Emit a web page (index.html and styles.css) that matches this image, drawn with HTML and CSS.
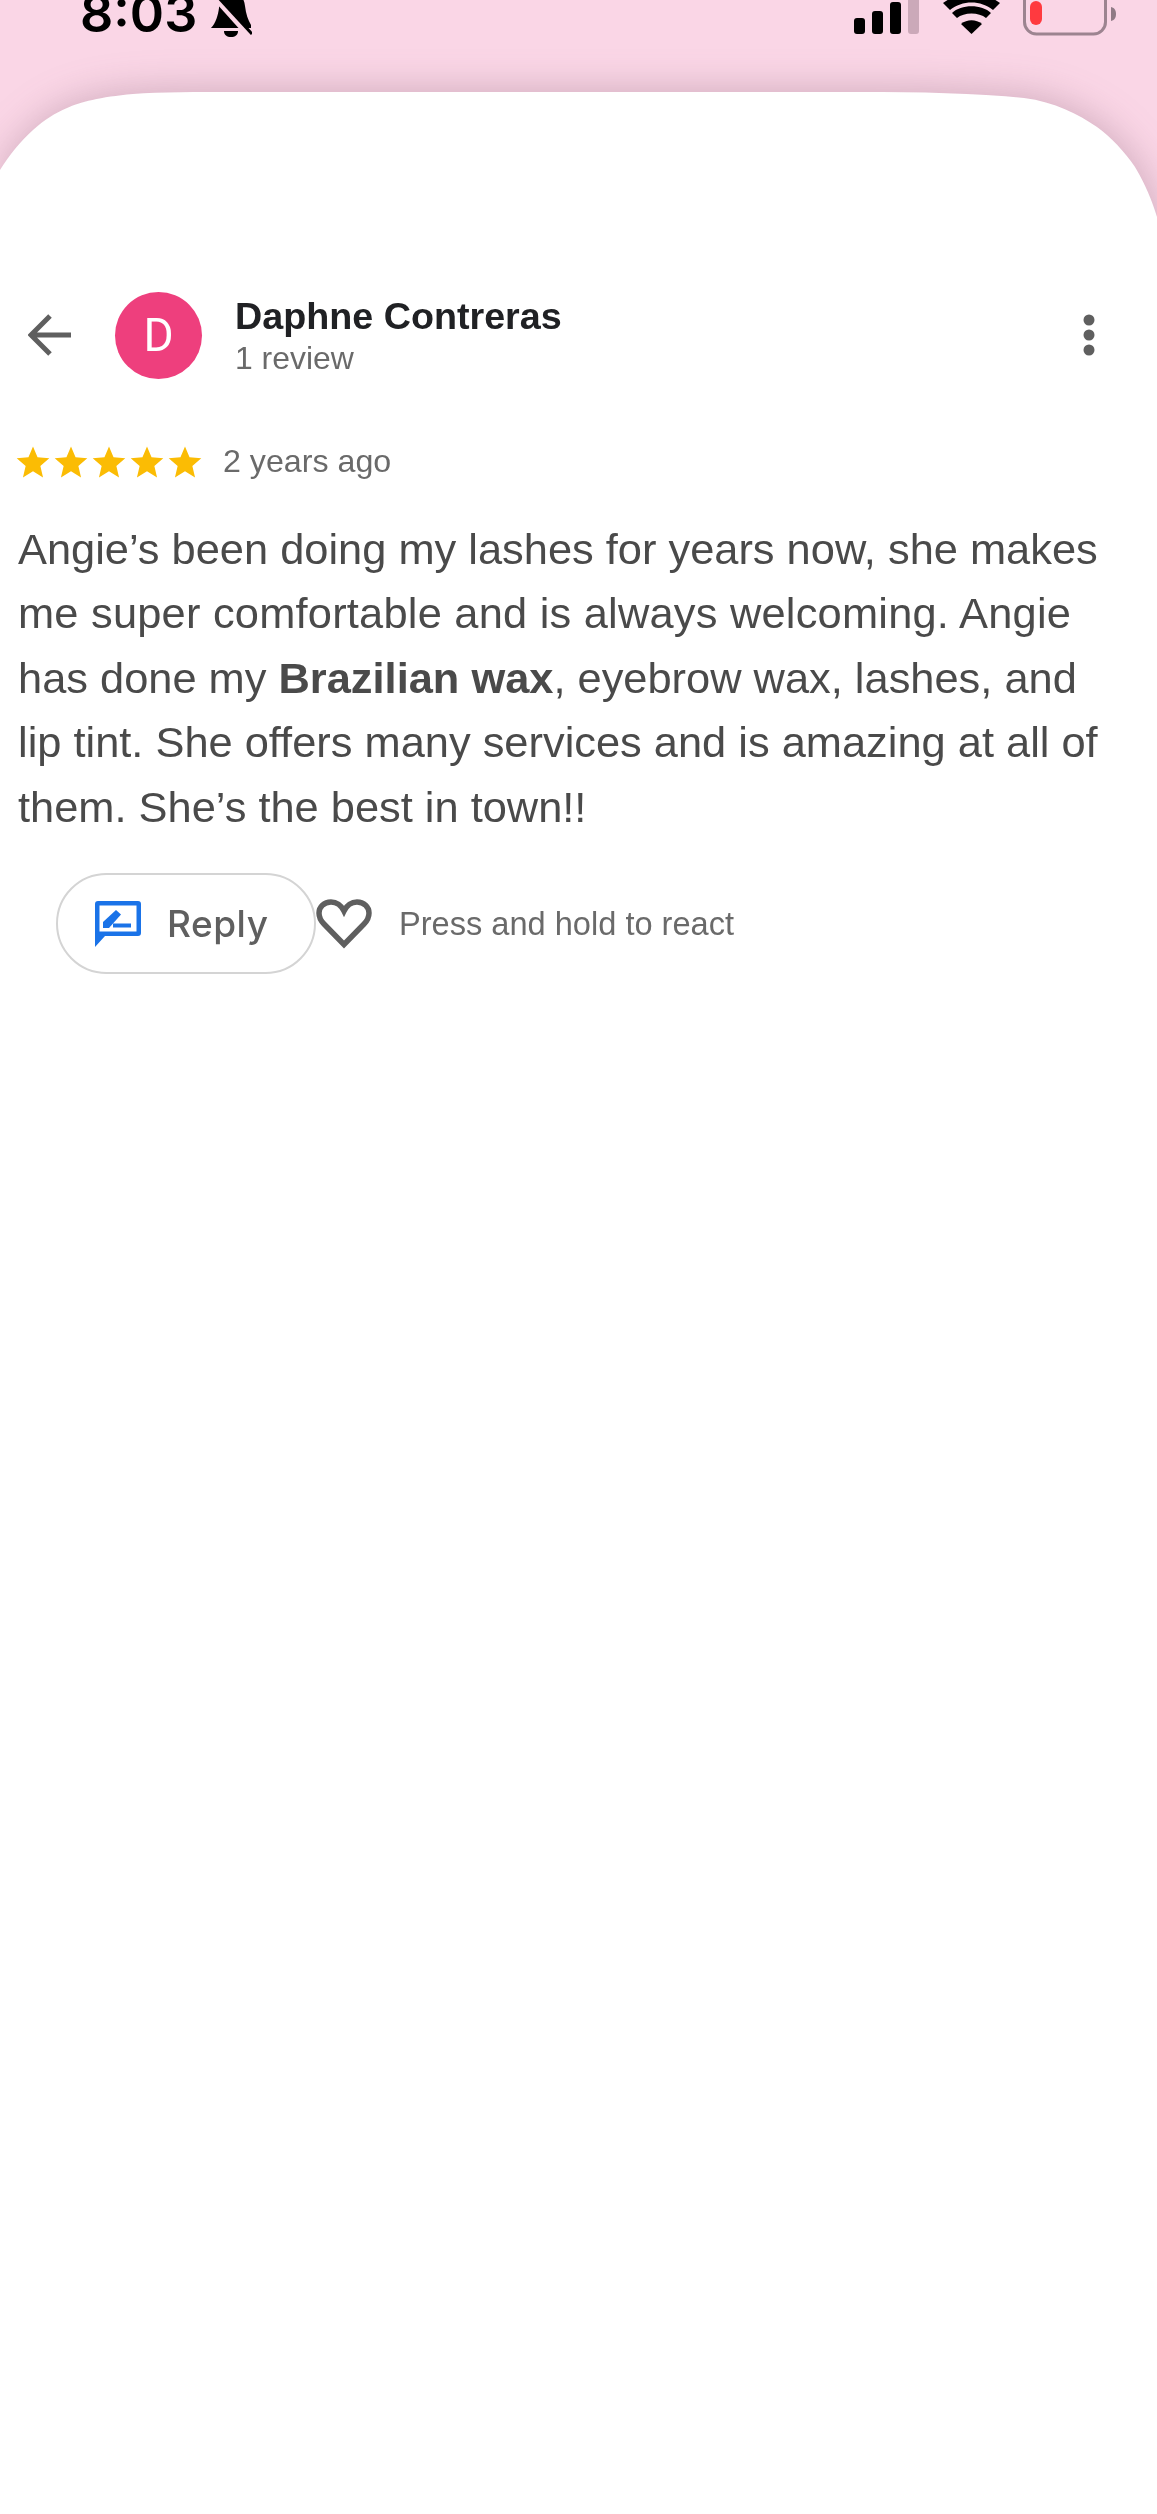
FILE: index.html
```html
<!DOCTYPE html>
<html lang="en">
<head>
<meta charset="utf-8">
<title>Review</title>
<link rel="stylesheet" href="styles.css">
</head>
<body>
<div class="status">
  <div class="status-left">
    <span class="time">8:03</span>
    <svg class="bell" viewBox="0 0 42 40"><path d="M1 28C6 23 8 15 9 8 10-2 16-8 22-8c8 0 12 6 13 14 1 8 3 14 6 19v3z" fill="#000"/><path d="M14 31h14c0 4-3 6-7 6s-7-2-7-6z" fill="#000"/><path d="M4-3l36 40" stroke="#fbd6e6" stroke-width="5" fill="none"/><path d="M8-3l34 37" stroke="#000" stroke-width="3" fill="none"/></svg>
  </div>
  <div class="status-right">
    <svg class="signal" viewBox="0 0 66 34"><rect x="0" y="18" width="11" height="16" rx="3" fill="#000"/><rect x="18" y="11" width="11" height="23" rx="3" fill="#000"/><rect x="36" y="2" width="11" height="32" rx="3" fill="#000"/><rect x="54" y="-6" width="11" height="40" rx="3" fill="#cba9b9"/></svg>
    <svg class="wifi" viewBox="0 0 58 34"><path d="M28.500 34L18 24c6-5 15-5 21 0z" fill="#000"/><path d="M9 13c9-9 30-9 39 0l-5 5c-7-6-22-6-29 0z" fill="#000"/><path d="M0 3c16-12 41-12 57 0l-7 7C38 0 19 0 7 10z" fill="#000"/></svg>
    <svg class="battery" viewBox="0 0 94 36"><rect x="1.500" y="-14" width="81" height="48" rx="12" fill="none" stroke="#9c8490" stroke-width="3"/><rect x="7" y="1" width="12" height="24" rx="6" fill="#ff3a3f"/><path d="M88 7c4 1 5 4 5 7s-1 6-5 7z" fill="#8f7a85"/></svg>
  </div>
</div>
<div class="sheet">
<main class="card">
  <header class="head">
    <svg class="back" viewBox="0 0 44 44"><path d="M43 22H4M22 3L3 22l19 19" fill="none" stroke="#5f5f5f" stroke-width="5"/></svg>
    <div class="avatar">D</div>
    <div class="who">
      <div class="name">Daphne Contreras</div>
      <div class="count">1 review</div>
    </div>
    <svg class="more" viewBox="0 0 12 42"><circle cx="6" cy="6" r="5.500" fill="#5f5f5f"/><circle cx="6" cy="21" r="5.500" fill="#5f5f5f"/><circle cx="6" cy="36" r="5.500" fill="#5f5f5f"/></svg>
  </header>
  <div class="rating">
    <div class="stars">
      <svg class="star" viewBox="0 0 24 24"><path d="M12 1l3.200 7.700 8.300.7-6.300 5.400 1.900 8.200L12 18.600 4.900 23l1.900-8.200L.5 9.400l8.300-.7z"/></svg>
      <svg class="star" viewBox="0 0 24 24"><path d="M12 1l3.200 7.700 8.300.7-6.300 5.400 1.900 8.200L12 18.600 4.900 23l1.900-8.200L.5 9.400l8.300-.7z"/></svg>
      <svg class="star" viewBox="0 0 24 24"><path d="M12 1l3.200 7.700 8.300.7-6.300 5.400 1.900 8.200L12 18.600 4.900 23l1.900-8.200L.5 9.400l8.300-.7z"/></svg>
      <svg class="star" viewBox="0 0 24 24"><path d="M12 1l3.200 7.700 8.300.7-6.300 5.400 1.900 8.200L12 18.600 4.900 23l1.900-8.200L.5 9.400l8.300-.7z"/></svg>
      <svg class="star" viewBox="0 0 24 24"><path d="M12 1l3.200 7.700 8.300.7-6.300 5.400 1.900 8.200L12 18.600 4.900 23l1.900-8.200L.5 9.400l8.300-.7z"/></svg>
    </div>
    <span class="ago">2 years ago</span>
  </div>
  <p class="body">Angie’s been doing my lashes for years now, she makes<br><span class="wide">me super comfortable and is always welcoming. Angie</span><br>has done my <b>Brazilian wax</b>, eyebrow wax, lashes, and<br>lip tint. She offers many services and is amazing at all of<br>them. She’s the best in town!!</p>
  <div class="actions">
    <button class="reply">
      <svg class="reply-icon" viewBox="0 0 46 46"><path d="M3 0h40a3 3 0 0 1 3 3v29a3 3 0 0 1-3 3H10L0 46V3a3 3 0 0 1 3-3z" fill="#1a73e8"/><rect x="4.500" y="4.500" width="37" height="26" fill="#fff"/><path d="M8 27v-6L21 9l5 4.500L14 27z" fill="#1a73e8"/><rect x="18" y="22.500" width="18" height="4" fill="#1a73e8"/></svg>
      <span>Reply</span>
    </button>
    <svg class="heart" viewBox="0 0 56 50"><path d="M28 45.500L8 25C4 21 3 17.500 3 14 3 8 8 3 15 3c5 0 10 3 13 9 3-6 8-9 13-9 7 0 12 5 12 11 0 3.500-1 7-5 11z" fill="none" stroke="#5f5f5f" stroke-width="5.500"/></svg>
    <span class="hint">Press and hold to react</span>
  </div>
</main>
</div>
</body>
</html>
```
FILE: styles.css
```css
html, body {
  margin: 0;
  padding: 0;
}
body {
  width: 1157px;
  height: 2514px;
  overflow: hidden;
  background: #fad6e6;
  font-family: "Liberation Sans", Arial, sans-serif;
  display: flex;
  flex-direction: column;
}
.status {
  height: 40px;
  margin-bottom: 52px;
  padding: 0 40px 0 80px;
  display: flex;
  justify-content: space-between;
  align-items: flex-start;
  overflow: hidden;
  flex: none;
}
.status-left {
  display: flex;
  align-items: flex-start;
  gap: 13px;
}
.time {
  font-family: Inter, sans-serif;
  font-weight: 600;
  font-size: 52px;
  line-height: 52px;
  margin-top: -12px;
  color: #000;
}
.bell {
  width: 42px;
  height: 40px;
  display: block;
}
.status-right {
  display: flex;
  align-items: flex-start;
}
.signal {
  width: 66px;
  height: 34px;
  margin-right: 23px;
  overflow: visible;
}
.wifi {
  width: 58px;
  height: 34px;
  margin-right: 22px;
}
.battery {
  width: 94px;
  height: 36px;
  overflow: hidden;
}
.sheet {
  flex: 1;
  display: flex;
  filter: drop-shadow(2px -3px 18px rgba(120, 80, 100, 0.3));
}
.card {
  flex: 1;
  background: #fff;
  clip-path: path("M0 78C10 62 20 50 33 38 44 28 55 21 67 16 80 10 100 5 133 2 160 0 200 0 233 0L860 0C920 0 975 1 1024 6 1055 10 1078 22 1097 35 1110 44 1125 60 1135 75 1145 92 1152 108 1157 125L1157 2422 0 2422Z");
  padding: 199px 0 0;
}
.head {
  display: flex;
  align-items: center;
  height: 88px;
  padding: 0 62px 0 28px;
}
.back {
  width: 44px;
  height: 44px;
  margin-right: 43px;
  flex: none;
}
.avatar {
  width: 87px;
  height: 87px;
  border-radius: 50%;
  background: #ee3f7d;
  color: #fff;
  font-family: Roboto, sans-serif;
  font-size: 46px;
  display: flex;
  align-items: center;
  justify-content: center;
  margin-right: 33px;
  flex: none;
}
.who {
  flex: 1;
}
.name {
  font-weight: 700;
  font-size: 37.700px;
  line-height: 42px;
  color: #202124;
}
.count {
  font-size: 31.900px;
  line-height: 36px;
  margin-top: 3px;
  color: #6a6a6a;
}
.more {
  width: 12px;
  height: 42px;
}
.rating {
  display: flex;
  align-items: center;
  margin-top: 64px;
  padding-left: 16px;
}
.stars {
  display: flex;
  gap: 4px;
  margin-right: 21px;
}
.star {
  width: 34px;
  height: 34px;
  fill: #fbbc04;
  display: block;
}
.ago {
  font-size: 32.200px;
  color: #6a6a6a;
}
.body {
  margin: 37px 0 0;
  padding-left: 18px;
  font-size: 43.400px;
  line-height: 64.400px;
  color: #4a4a4a;
  white-space: nowrap;
}
.wide {
  letter-spacing: 0.220px;
}
.actions {
  display: flex;
  align-items: center;
  margin-top: 34px;
  padding-left: 56px;
}
.reply {
  width: 260px;
  height: 101px;
  box-sizing: border-box;
  border: 2.500px solid #d4d4d4;
  border-radius: 51px;
  background: #fff;
  display: flex;
  align-items: center;
  padding: 0 0 0 37px;
  font-family: Inter, sans-serif;
  font-size: 37px;
  font-weight: 500;
  letter-spacing: 0.500px;
  color: #5f5f5f;
  flex: none;
}
.reply-icon {
  width: 46px;
  height: 46px;
  margin-right: 26px;
}
.heart {
  width: 56px;
  height: 50px;
  margin-right: 27px;
  flex: none;
}
.hint {
  font-size: 32.600px;
  color: #6a6a6a;
}
```
